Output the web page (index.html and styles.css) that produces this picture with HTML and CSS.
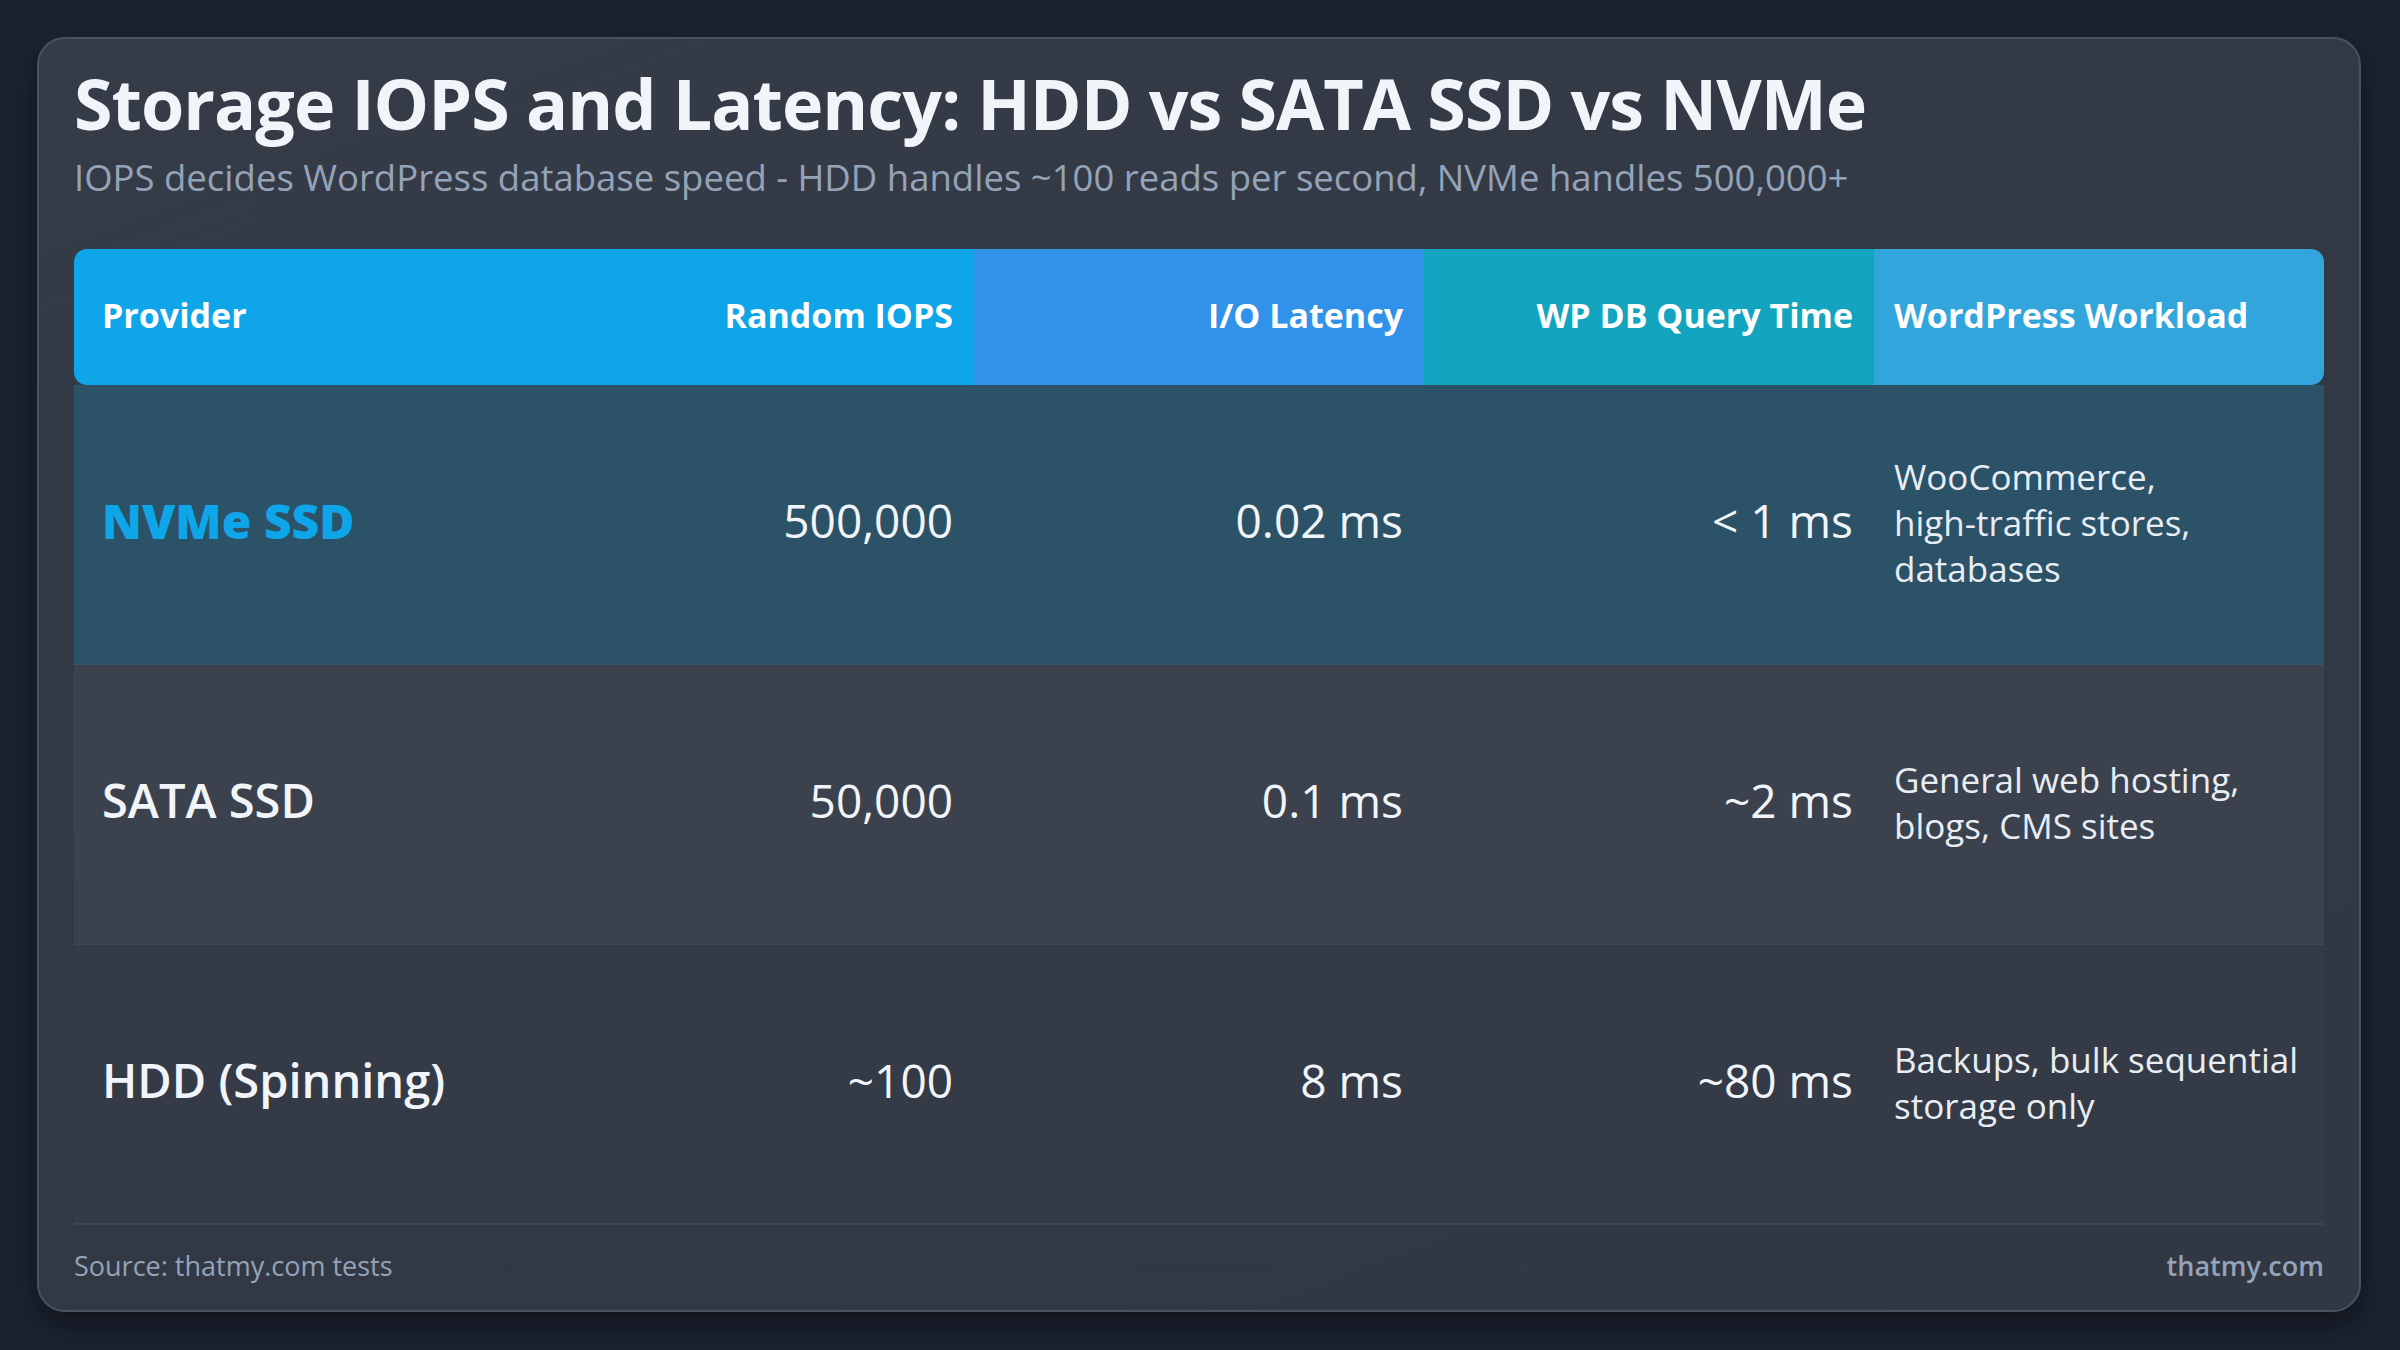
FILE: index.html
```html
<!DOCTYPE html>
<html lang="en">
<head>
<meta charset="utf-8">
<title>Storage IOPS and Latency</title>
<link rel="stylesheet" href="styles.css">
</head>
<body>
<div class="card">
  <header class="head">
    <h1 class="title">Storage IOPS and Latency: HDD vs SATA SSD vs NVMe</h1>
    <p class="subtitle">IOPS decides WordPress database speed - HDD handles ~100 reads per second, NVMe handles 500,000+</p>
  </header>
  <table class="grid">
    <thead>
      <tr>
        <th class="c1 h-sky">Provider</th>
        <th class="num h-sky">Random IOPS</th>
        <th class="num h-blue">I/O Latency</th>
        <th class="num h-teal">WP DB Query Time</th>
        <th class="c5 h-light">WordPress Workload</th>
      </tr>
    </thead>
    <tbody>
      <tr class="row row-hi">
        <td class="c1 name name-hi">NVMe SSD</td>
        <td class="num val">500,000</td>
        <td class="num val">0.02 ms</td>
        <td class="num val">&lt; 1 ms</td>
        <td class="c5 work">WooCommerce,<br>high-traffic stores,<br>databases</td>
      </tr>
      <tr class="row row-mid">
        <td class="c1 name">SATA SSD</td>
        <td class="num val">50,000</td>
        <td class="num val">0.1 ms</td>
        <td class="num val">~2 ms</td>
        <td class="c5 work">General web hosting,<br>blogs, CMS sites</td>
      </tr>
      <tr class="row row-low">
        <td class="c1 name">HDD (Spinning)</td>
        <td class="num val">~100</td>
        <td class="num val">8 ms</td>
        <td class="num val">~80 ms</td>
        <td class="c5 work">Backups, bulk sequential<br>storage only</td>
      </tr>
    </tbody>
  </table>
  <footer class="foot">
    <span class="source">Source: thatmy.com tests</span>
    <span class="brand">thatmy.com</span>
  </footer>
</div>
</body>
</html>
```

FILE: styles.css
```css
html, body {
  margin: 0;
  padding: 0;
}
body {
  background: #1c2330;
  width: 2400px;
  height: 1350px;
  padding: 37px 39px 38px 37px;
  box-sizing: border-box;
  font-family: "Open Sans", "Noto Sans", "DejaVu Sans", sans-serif;
  color: #f1f5f9;
}
.card {
  box-sizing: border-box;
  width: 2324px;
  height: 1275px;
  border: 2px solid #4a5261;
  border-radius: 28px;
  background: linear-gradient(160deg, #353c48 0%, #323945 50%, #313844 100%);
  box-shadow: 0 12px 30px rgba(0, 0, 0, 0.45);
  padding: 21px 35px 0 35px;
  display: flex;
  flex-direction: column;
}
.head {
  margin-bottom: 49px;
}
.title {
  margin: 0;
  font-size: 70px;
  line-height: 86px;
  font-weight: 700;
  letter-spacing: -1px;
  color: #f1f5f9;
}
.subtitle {
  margin: 8px 0 0 0;
  font-size: 36.5px;
  line-height: 46px;
  font-weight: 400;
  color: #94a3b8;
}
.grid {
  width: 100%;
  table-layout: fixed;
  border-collapse: separate;
  border-spacing: 0;
}
.grid th {
  height: 136px;
  box-sizing: border-box;
  padding: 0 21px 4px 20px;
  font-size: 34px;
  font-weight: 700;
  color: #ffffff;
  text-align: left;
  vertical-align: middle;
}
.grid th.num, .grid td.num {
  text-align: right;
}
.grid th.c1, .grid td.c1 {
  padding-left: 28px;
}
.h-sky { background: #0ea5e9; }
.h-blue { background: #3192ea; }
.h-teal { background: #13a4bf; }
.h-light { background: #32a5dc; }
.grid th:first-child { border-radius: 13px 0 0 13px; }
.grid th:last-child { border-radius: 0 13px 13px 0; }
.grid td {
  height: 280px;
  box-sizing: border-box;
  padding: 0 21px 9px 20px;
  vertical-align: middle;
  color: #f1f5f9;
  border-bottom: 1px solid rgba(255, 255, 255, 0.03);
}
.row-hi td { background: #2c5268; }
.row-mid td { background: #3b424e; }
.row-low td { background: #343b47; border-bottom: 2px solid #3d4654; }
.name {
  font-size: 47px;
  font-weight: 600;
}
.grid td.name-hi {
  color: #0ea5e9;
  font-size: 48px;
  font-weight: 800;
}
.val {
  font-size: 46px;
  font-weight: 400;
}
.grid td.work {
  padding-bottom: 3px;
  font-size: 35px;
  line-height: 46px;
  font-weight: 500;
  color: #e8edf4;
}
.foot {
  flex: 1;
  display: flex;
  justify-content: space-between;
  align-items: center;
  padding-bottom: 4px;
  font-size: 27px;
  color: #94a3b8;
}
.brand {
  font-weight: 600;
}
```
